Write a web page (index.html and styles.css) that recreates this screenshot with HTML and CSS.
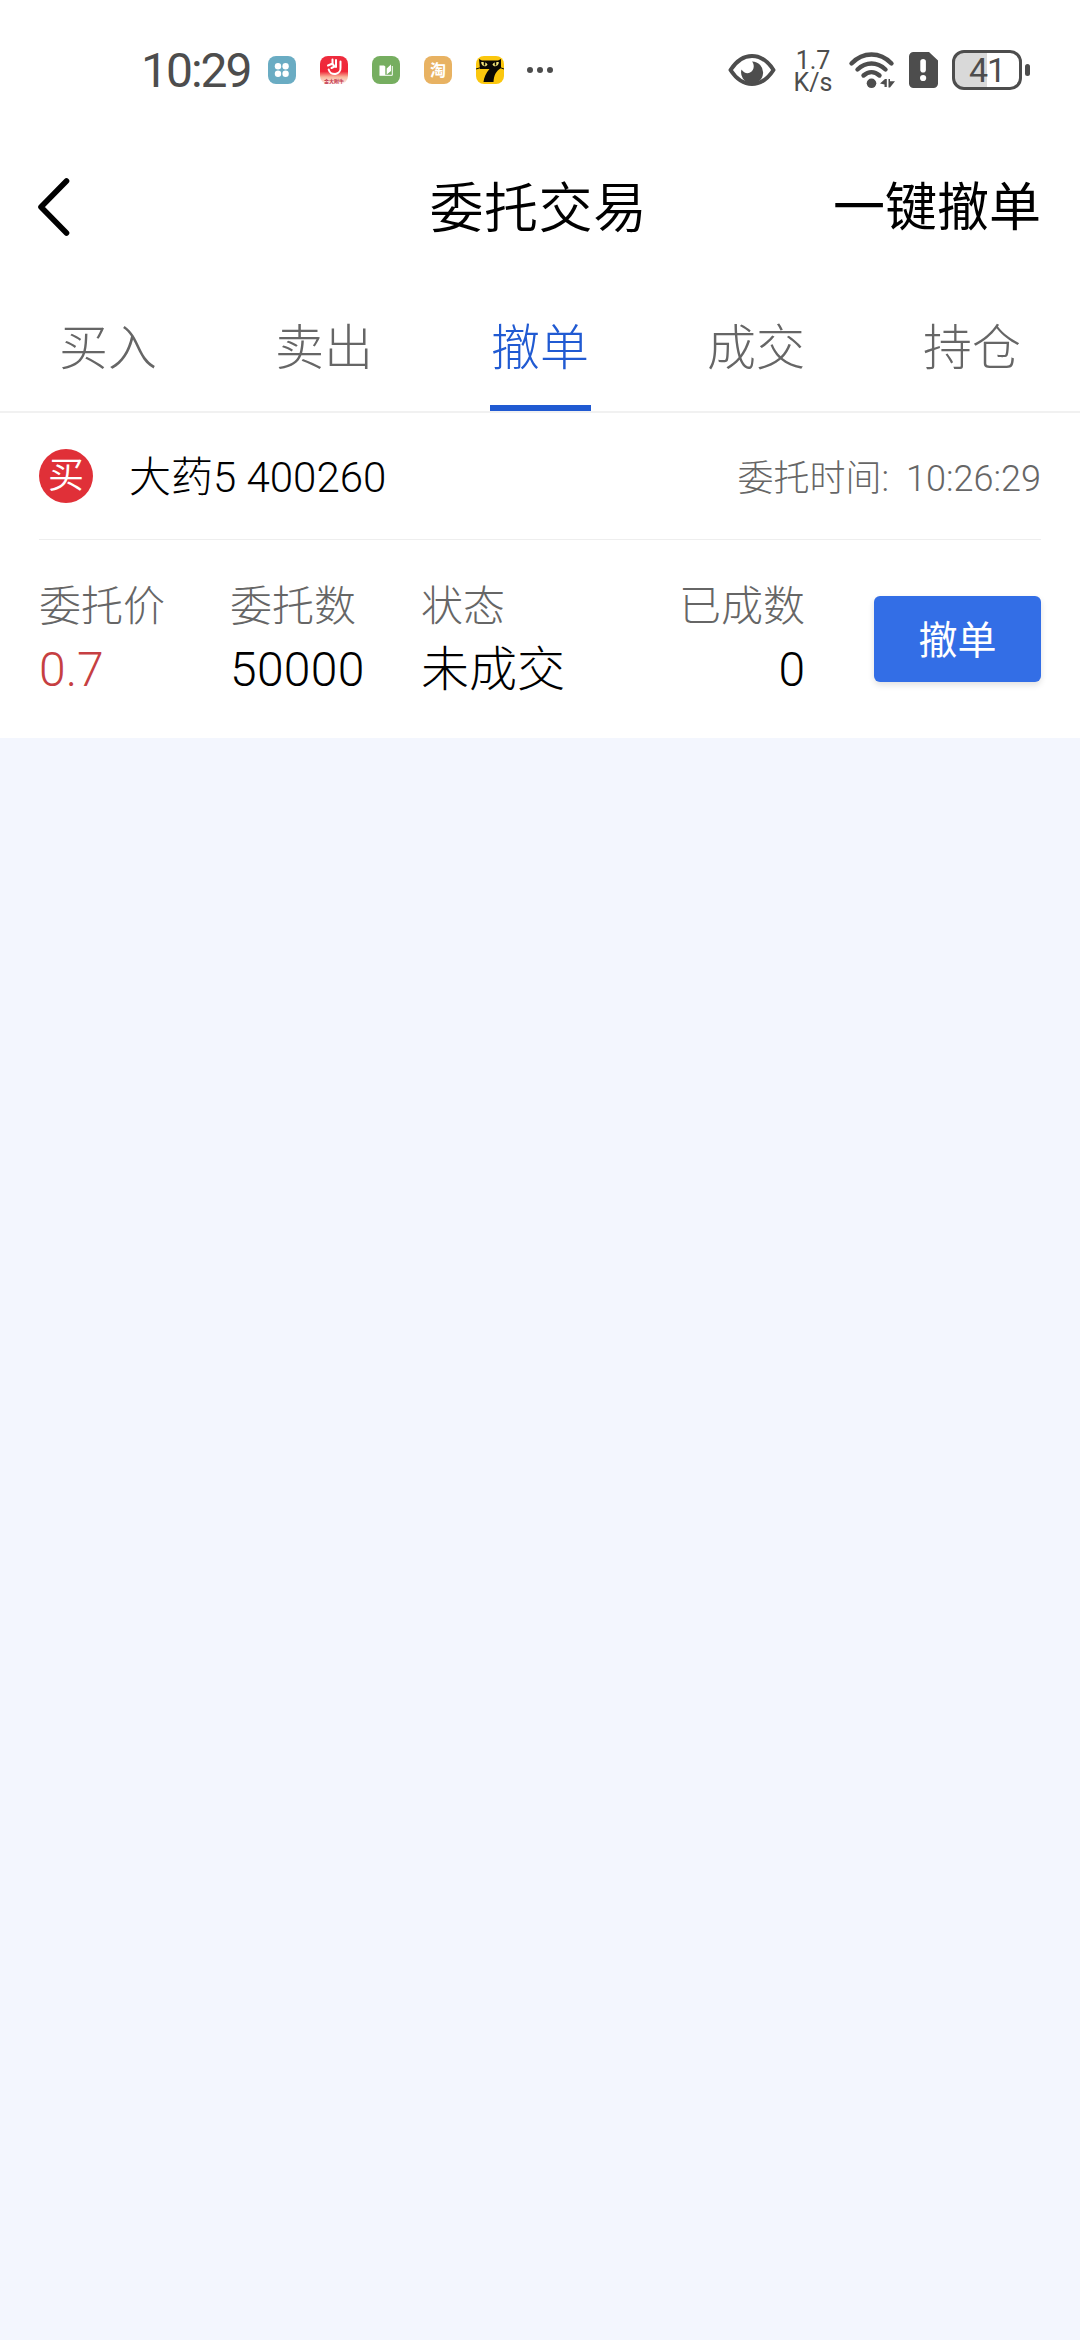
FILE: index.html
```html
<!doctype html>
<html lang="zh-CN">
    <head>
        <title>委托交易</title>
        <meta charset="utf-8">
        <link rel="stylesheet" href="styles.css">
    </head>
    
    <body>
        <!--状态栏-->
        <div class="status">
            <span class="clock">10:29</span>
            <div class="apps">
                <svg width="28" height="28" viewBox="0 0 28 28">
                    <rect width="28" height="28" rx="8" fill="#6aacc3"/>
                    <g fill="#fff"><circle cx="10" cy="10.3" r="3.2"/><circle cx="17.6" cy="10.3" r="3.2"/><circle cx="10" cy="17.8" r="3.2"/><circle cx="17.6" cy="17.8" r="3.2"/></g>
                </svg>
                <svg width="28" height="28" viewBox="0 0 28 28">
                    <defs>
                        <linearGradient id="red" x1="0" y1="0" x2="0" y2="1">
                            <stop offset="0" stop-color="#ee2c3e"/>
                            <stop offset=".55" stop-color="#f02637"/>
                            <stop offset=".75" stop-color="#f9b79c"/>
                            <stop offset="1" stop-color="#fff0ee"/>
                        </linearGradient>
                    </defs>
                    <rect width="28" height="28" rx="8" fill="url(#red)"/>
                    <path d="M20.500 5.500v6a6 6 0 0 1-11.800 2M16 4v7M12.500 3.500v5M8 9.500l4.500-2 2 3-3 1.500" fill="none" stroke="#fff" stroke-width="2" stroke-linecap="round"/>
                    <text x="14" y="26.6" class="tiny">金大附牛</text>
                </svg>
                <svg width="28" height="28" viewBox="0 0 28 28">
                    <rect width="28" height="28" rx="8" fill="#76ae60"/>
                    <path d="M7.500 9.500h4.500l1.300 1V19H7.500zM14.700 18.500v-6l4.300-4v6.500z" fill="#fff"/>
                    <path d="M20.300 10v9.300H7.500" fill="none" stroke="#fff" stroke-width="1"/>
                </svg>
                <svg width="28" height="28" viewBox="0 0 28 28">
                    <rect width="28" height="28" rx="8" fill="#e8b262"/>
                    <text x="14" y="20" class="tao">淘</text>
                </svg>
                <svg width="28" height="28" viewBox="0 0 28 28">
                    <rect width="28" height="28" rx="8" fill="#fbc70d"/>
                    <path d="M3 3l3 1.500h16L25 3v9c-5 3-7 7-7.500 14H7.500C8 21 10 17 13.500 13H4z" fill="#0b0904"/>
                    <path d="M0 13l5-1.500M28 13l-4-1.500" stroke="#0b0904" stroke-width="1"/>
                    <path d="M5 6.500c1.500-1 5-.5 6.500 2-1 2.300-5 3-6.500-2zM23 6.500c-1.500-1-5-.5-6.500 2 1 2.300 5 3 6.500-2z" fill="#f7e87c"/>
                    <path d="M8.500 6v3.500M19.500 6v3.500" stroke="#0b0904" stroke-width="1.500"/>
                </svg>
            </div>
            <svg class="dots" width="28" height="8" viewBox="0 0 28 8"><g fill="#4d4d4d"><circle cx="4" cy="4" r="3"/><circle cx="14" cy="4" r="3"/><circle cx="24" cy="4" r="3"/></g></svg>

            <svg class="eye" width="48" height="34" viewBox="0 0 48 34">
                <path d="M2.500 17C8 8.500 15 3 24 3s16 5.500 21.500 14C40 25.500 33 31 24 31S8 25.500 2.500 17z" fill="none" stroke="#4d4d4d" stroke-width="4" stroke-linejoin="round"/>
                <path d="M24 8.500a11 11 0 1 1-10.500 8c2 3.500 6 4.500 8.500 3 4-2 5-7.500 2-11z" fill="#4d4d4d"/>
            </svg>
            <div class="speed"><span>1.7</span><span>K/s</span></div>
            <svg class="wifi" width="48" height="38" viewBox="0 0 48 38">
                <g fill="none" stroke="#4d4d4d" stroke-width="4.400" stroke-linecap="round">
                    <path d="M3.500 12.500C15 .5 32 .5 43.500 12.500"/>
                    <path d="M9.500 18.500c8.500-8 19.500-8 28 0"/>
                    <path d="M15.500 24.500c5-4.500 11-4.500 16 0"/>
                </g>
                <circle cx="23.500" cy="32.300" r="4.800" fill="#4d4d4d"/>
                <path d="M38.800 28v8h-2.300v-2.500L32 32.500l5-4.500zM40.500 28H42v2.300h5L42 36.500h-1.500z" fill="#4d4d4d"/>
            </svg>
            <svg class="sim" width="29" height="36" viewBox="0 0 29 36">
                <path d="M4.500 0H20l9 8.500v23a4.500 4.500 0 0 1-4.500 4.500h-20A4.500 4.500 0 0 1 0 31.500v-27A4.500 4.500 0 0 1 4.500 0z" fill="#4d4d4d"/>
                <rect x="11.300" y="7" width="5.600" height="13.500" rx="2.800" fill="#fff"/>
                <circle cx="14.100" cy="26" r="3.100" fill="#fff"/>
            </svg>
            <div class="battery">41</div>
            <i class="nub"></i>
        </div>

        <!--标题-->
        <div class="header">
            <svg class="back" width="36" height="60" viewBox="0 0 36 60"><path d="M30.500 4L5 30l25.500 26" fill="none" stroke="#000" stroke-width="5.600" stroke-linecap="round" stroke-linejoin="round"/></svg>
            <h1>委托交易</h1>
            <a class="all">一键撤单</a>
        </div>

        <div class="tabs">
            <a>买入</a>
            <a>卖出</a>
            <a class="on">撤单</a>
            <a>成交</a>
            <a>持仓</a>
        </div>

        <!--委托列表-->
        <div class="order">
            <div class="top">
                <i class="buy">买</i>
                <span class="name">大药5 400260</span>
                <span class="time">委托时间:<b>10:26:29</b></span>
            </div>
            <div class="info">
                <dl><dt>委托价</dt><dd class="price">0.7</dd></dl>
                <dl><dt>委托数</dt><dd class="num">50000</dd></dl>
                <dl><dt>状态</dt><dd>未成交</dd></dl>
                <dl class="done"><dt>已成数</dt><dd>0</dd></dl>
                <button class="cancel">撤单</button>
            </div>
        </div>
    </body>
</html>
```
FILE: styles.css
```css
*{margin:0;padding:0;box-sizing:border-box;}
body{
    background:#f3f6fe;
    color:#000;
    font-family:Roboto,"Noto Sans CJK SC",sans-serif;
    font-weight:300;
}
i,b{font-style:normal;font-weight:300;}
svg{display:block;flex:none;}
.status{
    display:flex;
    align-items:center;
    height:140px;
    padding-left:141px;
    background:#fff;
    color:#4d4d4d;
}
.clock{
    width:127px;
    font-size:48px;
    font-weight:400;
    letter-spacing:-2px;
    white-space:nowrap;
}
.apps{
    display:flex;
    gap:24px;
}
.tiny{font-size:5px;font-weight:700;text-anchor:middle;fill:#c2344a;}
.tao{font-size:16px;font-weight:700;text-anchor:middle;fill:#fff;}
.dots{margin-left:22px;}
.eye{margin-left:174px;}
.speed{
    display:flex;
    flex-direction:column;
    width:54px;
    margin-left:10px;
    padding-top:3px;
    text-align:center;
    font-size:25px;
    font-weight:400;
    line-height:22px;
}
.wifi{margin-left:8px;}
.sim{margin-left:13px;}
.battery{
    width:70px;
    height:40px;
    margin-left:14px;
    border:3px solid #4d4d4d;
    border-radius:12px;
    background:linear-gradient(90deg,#d9d9d9 50%,#fff 50%);
    font-size:34px;
    font-weight:400;
    line-height:35px;
    letter-spacing:-1px;
    text-align:center;
}
.nub{
    width:5px;
    height:12px;
    margin-left:3px;
    border-radius:3px;
    background:#4d4d4d;
}
.header{
    display:grid;
    grid-template-columns:1fr auto 1fr;
    align-items:center;
    height:134px;
    padding:0 39px 0 36px;
    background:#fff;
}
.header h1{
    padding-top:5px;
    font-size:54px;
    line-height:80px;
    font-weight:350;
    letter-spacing:.5px;
}
.all{
    justify-self:end;
    padding-top:4px;
    font-size:52px;
    line-height:80px;
    font-weight:400;
}
.tabs{
    display:flex;
    height:139px;
    background:#fff;
    border-bottom:2px solid #f1f1f1;
}
.tabs a{
    display:flex;
    flex-direction:column;
    align-items:center;
    flex:1;
    padding-top:39px;
    font-size:49px;
    line-height:72px;
    color:#666;
}
.tabs .on{color:#205ad2;}
.tabs .on:after{
    content:"";
    width:101px;
    height:6px;
    margin-top:20px;
    background:#205ad2;
}
.order{
    height:325px;
    padding:0 39px;
    background:#fff;
}
.top{
    display:flex;
    align-items:center;
    height:127px;
    border-bottom:1px solid #eee;
}
.buy{
    width:54px;
    height:54px;
    border-radius:50%;
    background:#e03038;
    color:#fff;
    font-size:36px;
    font-weight:350;
    line-height:54px;
    text-align:center;
}
.name{
    margin-left:36px;
    padding-bottom:5px;
    font-size:42px;
}
.time{
    margin-left:auto;
    padding-bottom:3px;
    font-size:36px;
    color:#666;
}
.time b{margin-left:17px;}
.info{
    display:flex;
    padding-top:35px;
}
.info dl{width:191px;}
.info dt{
    font-size:42px;
    line-height:64px;
    color:#666;
}
.info dd{
    font-size:48px;
    line-height:62px;
}
.info .num{letter-spacing:.3px;}
.info .price{color:#c63f42;}
.info .done{width:193px;text-align:right;}
.cancel{
    width:167px;
    height:86px;
    margin:21px 0 0 auto;
    padding-bottom:4px;
    border:0;
    border-radius:6px;
    background:#336ee6;
    box-shadow:0 3px 6px rgba(0,0,0,.12);
    color:#fff;
    font-family:inherit;
    font-size:39px;
}
```
